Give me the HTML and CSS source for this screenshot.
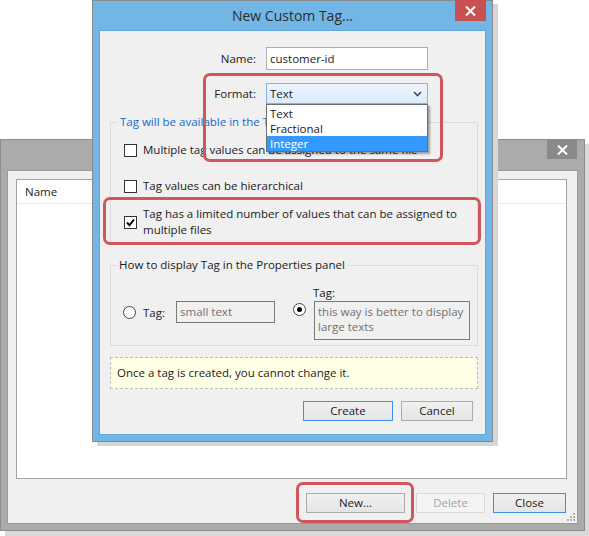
FILE: index.html
```html
<!DOCTYPE html>
<html>
<head>
<meta charset="utf-8">
<link rel="stylesheet" href="styles.css">
</head>
<body>
<div class="win bgwin">
  <div class="titlebar">
    <span class="bg-close"><svg width="11" height="10" viewBox="0 0 11 10"><path d="M1 0.5 L10 9.5 M10 0.5 L1 9.5" stroke="#fff" stroke-width="2"/></svg></span>
  </div>
  <div class="bg-inner">
    <div class="list"><div class="list-head">Name</div></div>
    <div class="bg-buttons">
      <button class="btn btn-new">New...</button>
      <button class="btn btn-delete" disabled>Delete</button>
      <button class="btn btn-close default">Close</button>
    </div>
    <svg class="grip" width="9" height="9" viewBox="0 0 9 9"><g fill="#b4b4b4"><rect x="6" y="0" width="2" height="2"/><rect x="3" y="3" width="2" height="2"/><rect x="6" y="3" width="2" height="2"/><rect x="0" y="6" width="2" height="2"/><rect x="3" y="6" width="2" height="2"/><rect x="6" y="6" width="2" height="2"/></g></svg>
  </div>
</div>

<div class="win dialog">
  <div class="titlebar dlg-title">
    <span class="dlg-title-text">New Custom Tag...</span>
    <span class="dlg-close"><svg width="11" height="10" viewBox="0 0 11 10"><path d="M1 0.5 L10 9.5 M10 0.5 L1 9.5" stroke="#fff" stroke-width="2"/></svg></span>
  </div>
  <div class="dlg-inner">
    <div class="form">
      <label class="form-label">Name:</label>
      <div class="input">customer-id</div>
      <label class="form-label">Format:</label>
      <div class="select"><span>Text</span><svg width="9" height="6" viewBox="0 0 9 6"><path d="M1 1 L4.5 4.5 L8 1" fill="none" stroke="#4a4a4a" stroke-width="1.6"/></svg></div>
    </div>

    <fieldset class="group g1">
      <legend class="legend-blue">Tag will be available in the Tags panel</legend>
      <div class="check r1"><span class="cb"></span><span>Multiple tag values can be assigned to the same file</span></div>
      <div class="check r2"><span class="cb"></span><span>Tag values can be hierarchical</span></div>
      <div class="check r3"><span class="cb"><svg width="11" height="11" viewBox="0 0 11 11"><path d="M2 5.5 L4.5 8.3 L9 2.5" fill="none" stroke="#000" stroke-width="2"/></svg></span><span>Tag has a limited number of values that can be assigned to<br>multiple files</span></div>
    </fieldset>

    <fieldset class="group g2">
      <legend>How to display Tag in the Properties panel</legend>
      <div class="display-row">
        <div class="opt1">
          <span class="radio"></span>
          <span class="opt-label">Tag:</span>
          <div class="field small">small text</div>
        </div>
        <span class="radio radio2 on"></span>
        <div class="opt2">
          <div class="opt2-label">Tag:</div>
          <div class="field large">this way is better to display<br>large texts</div>
        </div>
      </div>
    </fieldset>

    <div class="info">Once a tag is created, you cannot change it.</div>

    <div class="dlg-buttons">
      <button class="btn btn-create default">Create</button>
      <button class="btn btn-cancel">Cancel</button>
    </div>

    <div class="dropdown">
      <div class="dd-item">Text</div>
      <div class="dd-item">Fractional</div>
      <div class="dd-item sel">Integer</div>
    </div>
  </div>
</div>

<div class="mark mark-format"></div>
<div class="mark mark-limited"></div>
<div class="mark mark-new"></div>
</body>
</html>
```

FILE: styles.css
```css
* { box-sizing: border-box; }
html, body { margin: 0; padding: 0; }
body {
  width: 589px;
  height: 536px;
  position: relative;
  overflow: hidden;
  background: #fff;
  font-family: "Open Sans", "Noto Sans", sans-serif;
  font-size: 11.5px;
  color: #1b1b1b;
}

.win { position: absolute; display: flex; flex-direction: column; }

.titlebar {
  display: grid;
  grid-template-columns: 1fr auto 1fr;
  flex: none;
}

/* background window */
.bgwin {
  left: 0;
  top: 139px;
  width: 585px;
  height: 392px;
  background: #ababab;
  border: 1px solid #8e8e8e;
  padding: 0 6px 6px;
  box-shadow: 5px 5px 0 #dadada;
}
.bgwin .titlebar { height: 30px; }
.bg-close {
  grid-column: 3;
  justify-self: end;
  align-self: start;
  width: 30px;
  height: 19px;
  margin-right: 1px;
  background: #8a8a8a;
  display: flex;
  align-items: center;
  justify-content: center;
}
.bg-inner {
  flex: 1;
  position: relative;
  background: #f0f0f0;
  border: 1px solid #9a9a9a;
  padding: 8px 10px 0 8px;
  display: flex;
  flex-direction: column;
}
.list {
  height: 300px;
  flex: none;
  background: #fff;
  border: 1px solid #a3a3a3;
}
.list-head {
  height: 24px;
  line-height: 23px;
  padding-left: 8px;
  border-bottom: 1px solid #e3ebf5;
}
.bg-buttons {
  display: flex;
  justify-content: flex-end;
  margin-top: 14px;
  padding-right: 1px;
}
.grip { position: absolute; right: 1px; bottom: 1px; }

.btn {
  height: 20px;
  padding: 0;
  font-family: inherit;
  font-size: 11.5px;
  color: #1b1b1b;
  border: 1px solid #acacac;
  background: linear-gradient(#f0f0f0, #e5e5e5);
  line-height: 18px;
}
.btn.default { border-color: #3c8fe6; }
.btn-new { width: 99px; }
.btn-delete {
  width: 69px;
  margin-left: 11px;
  color: #a3a3a3;
  border-color: #d9d9d9;
  background: #f4f4f4;
}
.btn-close { width: 73px; margin-left: 8px; }

/* dialog */
.dialog {
  left: 92px;
  top: 0;
  width: 401px;
  height: 442px;
  background: #72b6e6;
  border: 1px solid #8a8a8a;
  padding: 0 6px 6px;
  box-shadow: 5px 4px 0 #d6d6d6;
}
.dlg-title { height: 29px; }
.dlg-title-text {
  grid-column: 2;
  font-size: 14px;
  line-height: 29px;
  color: #2d2d2d;
}
.dlg-close {
  grid-column: 3;
  justify-self: end;
  align-self: start;
  width: 31px;
  height: 21px;
  margin-top: -1px;
  background: #c75050;
  display: flex;
  align-items: center;
  justify-content: center;
}
.dlg-inner {
  flex: 1;
  position: relative;
  background: #f0f0f0;
  border: 1px solid #62a5d8;
  padding: 16px 7px 0 10px;
}

.form {
  display: grid;
  grid-template-columns: 146px 162px;
  column-gap: 10px;
  row-gap: 13px;
  align-items: center;
}
.form-label { text-align: right; }
.input {
  height: 23px;
  background: #fff;
  border: 1px solid #abadb3;
  padding-left: 3px;
  line-height: 21px;
}
.select {
  height: 21px;
  border: 1px solid #7eb4ea;
  background: linear-gradient(#ecf4fc, #dcecfc);
  padding: 0 5px 0 3px;
  display: flex;
  align-items: center;
  justify-content: space-between;
}

.group {
  margin: 10px 0 0;
  width: 368px;
  border: 1px solid #dcdcdc;
  min-width: 0;
}
.group legend {
  padding: 0 2px;
  margin-left: -6px;
  line-height: 16px;
}
.legend-blue { color: #1a66cc; }
.g1 { padding: 12px 0 5px 13px; }
.g2 { margin-top: 13px; padding: 12px 0 5px 12px; }

.check { display: flex; align-items: center; gap: 6px; line-height: 16px; }
.r2 { margin-top: 20px; }
.r3 { margin-top: 12px; }
.cb {
  width: 13px;
  height: 13px;
  flex: none;
  background: #fff;
  border: 1px solid #333;
  display: flex;
  align-items: center;
  justify-content: center;
}

.display-row { display: flex; align-items: flex-start; }
.opt1 { display: flex; align-items: center; height: 22px; margin-top: 16px; }
.radio {
  width: 13px;
  height: 13px;
  flex: none;
  border-radius: 50%;
  border: 1px solid #444;
  background: #fff;
  display: flex;
  align-items: center;
  justify-content: center;
}
.radio.on::after {
  content: "";
  width: 5px;
  height: 5px;
  border-radius: 50%;
  background: #000;
}
.opt-label { width: 33px; margin-left: 7px; }
.field {
  border: 1px solid #7a7a7a;
  color: #707070;
  padding-left: 3px;
}
.small { width: 99px; height: 22px; line-height: 20px; }
.radio2 { margin-left: 18px; margin-top: 18px; }
.opt2 { margin-left: 8px; }
.opt2-label { line-height: 16px; margin-left: -1px; }
.large { width: 156px; height: 39px; line-height: 15px; padding-top: 2px; }

.info {
  margin-top: 11px;
  width: 368px;
  height: 32px;
  background: #ffffe6;
  border: 1px dashed #bcbcbc;
  padding-left: 6px;
  line-height: 30px;
}

.dlg-buttons {
  display: flex;
  justify-content: flex-end;
  margin-top: 12px;
  margin-right: 5px;
}
.btn-create { width: 90px; }
.btn-cancel { width: 72px; margin-left: 8px; }

.dropdown {
  position: absolute;
  left: 166px;
  top: 73px;
  width: 162px;
  background: #fff;
  border: 1px solid #6e6e6e;
  padding-top: 1px;
  box-shadow: 2px 2px 2px rgba(0, 0, 0, 0.35);
}
.dd-item { line-height: 15px; padding-left: 3px; }
.dd-item.sel { background: #3399ff; color: #fff; }

.mark {
  position: absolute;
  border: 3px solid #d0565c;
  border-radius: 7px;
}
.mark-format { left: 203px; top: 73px; width: 240px; height: 89px; }
.mark-limited { left: 103px; top: 197px; width: 378px; height: 48px; }
.mark-new { left: 296px; top: 482px; width: 118px; height: 41px; }
```
